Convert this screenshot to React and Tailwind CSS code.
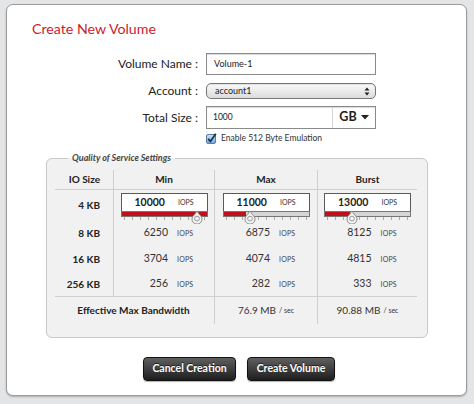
import React from 'react';

const rows = [
  { size: '8 KB', min: 6250, max: 6875, burst: 8125 },
  { size: '16 KB', min: 3704, max: 4074, burst: 4815 },
  { size: '256 KB', min: 256, max: 282, burst: 333 },
];

const Iops = ({ value }) => (
  <div className="flex items-center justify-center">
    <span className="w-[32px] text-right text-[10.5px] text-[#333]">{value}</span>
    <span className="ml-[9px] w-[15px] text-[7px] text-[#444] tracking-[0.2px]">IOPS</span>
  </div>
);

const Slider = ({ value, pct, handle }) => (
  <div className="relative w-[87px] mx-auto mt-[3px]">
    <div className="h-[18px] bg-white border border-[#5a5a5a] border-b-0 flex items-center justify-center">
      <span className="text-[10.5px] font-bold text-[#222]">{value}</span>
      <span className="ml-[13px] text-[7px] text-[#333]">IOPS</span>
    </div>
    <div className="h-[6px] border border-[#777] bg-[#d6d6d6]">
      <div className="h-full bg-[#c10f1c]" style={{ width: pct + '%' }} />
    </div>
    <div className="flex justify-between px-[3px] h-[5px]">
      {Array.from({ length: 11 }).map((_, i) => (
        <span key={i} className="w-px h-[3px] bg-[#aaa]" />
      ))}
    </div>
    <svg
      className="absolute top-[17px]"
      style={{ left: handle - 7 }}
      width="14"
      height="14"
      viewBox="0 0 14 14"
    >
      <path d="M7 1 L9.5 4.8 A5 5 0 1 1 4.5 4.8 Z" fill="#f4f4f4" stroke="#8a8a8a" strokeWidth="1" />
      <circle cx="7" cy="8.6" r="2.4" fill="none" stroke="#9a9a9a" strokeWidth="1" />
    </svg>
  </div>
);

const Checkbox = () => (
  <svg width="11" height="11" viewBox="0 0 11 11">
    <defs>
      <linearGradient id="cb" x1="0" y1="0" x2="0" y2="1">
        <stop offset="0" stopColor="#cfe3f7" />
        <stop offset="1" stopColor="#6ea6dc" />
      </linearGradient>
    </defs>
    <rect x="0.5" y="1.5" width="9" height="9" rx="1.5" fill="url(#cb)" stroke="#5a7fa8" />
    <path d="M2.2 5.8 L4.4 8.4 L9.8 0.8" fill="none" stroke="#1b2f4a" strokeWidth="1.8" />
  </svg>
);

export default function App() {
  return (
    <div className="w-[474px] h-[404px] bg-[#e4e5e6] pt-[4px] pl-[6px] font-[Lato,sans-serif] text-[#222]">
      <div className="w-[461px] h-[392px] bg-white border border-[#9c9c9c] rounded-[7px] shadow-[0_1px_2px_rgba(0,0,0,0.25)]">
        <h1 className="pl-[25px] pt-[15px] text-[14.2px] leading-[18px] text-[#cc1b2b]">Create New Volume</h1>

        {/* form */}
        <div className="mt-[15px] grid grid-cols-[191px_170px] gap-x-[8px] items-center">
          <label className="text-right text-[12px]">Volume Name :</label>
          <div className="h-[22px] border border-[#8a8a8a] shadow-[inset_0_1px_1px_rgba(0,0,0,0.15)] flex items-center pl-[7px] text-[9px]">
            Volume-1
          </div>

          <label className="mt-[7px] text-right text-[12px]">Account :</label>
          <div className="mt-[7px] h-[16px] rounded-[5px] border border-[#777] bg-gradient-to-b from-[#fafafa] to-[#dcdcdc] shadow-[inset_0_1px_1px_rgba(0,0,0,0.1)] flex items-center justify-between pl-[8px] pr-[5px] text-[9px]">
            <span>account1</span>
            <svg width="6" height="9" viewBox="0 0 6 9">
              <path d="M0.5 3.5 L3 0.5 L5.5 3.5 Z M0.5 5.5 L3 8.5 L5.5 5.5 Z" fill="#222" />
            </svg>
          </div>

          <label className="mt-[6px] text-right text-[12px]">Total Size :</label>
          <div className="mt-[6px] h-[23px] border border-[#8a8a8a] shadow-[inset_0_1px_1px_rgba(0,0,0,0.15)] flex items-stretch text-[8.5px]">
            <span className="flex-1 flex items-center pl-[6px]">1000</span>
            <div className="w-[43px] border-l border-[#d6d6d6] flex items-center justify-center gap-[4px]">
              <span className="text-[12.5px] font-bold">GB</span>
              <svg width="8" height="5" viewBox="0 0 8 5">
                <path d="M0 0 H8 L4 4.5 Z" fill="#222" />
              </svg>
            </div>
          </div>

          <div />
          <div className="mt-[3px] flex items-center gap-[4px] h-[12px] text-[8.5px] text-[#333]">
            <Checkbox />
            <span>Enable 512 Byte Emulation</span>
          </div>
        </div>

        {/* QoS */}
        <fieldset className="ml-[39px] mt-[8px] w-[382px] h-[186px] rounded-[6px] border border-[#c9c9c9] bg-[#f1f1f1] pl-[8px] pt-[6px]">
          <legend className="ml-[13px] px-[4px] text-[9px] font-bold italic text-[#444] leading-[12px]">
            Quality of Service Settings
          </legend>

          <div className="grid grid-cols-[58px_101px_103px_100px] text-[10px]">
            {/* header */}
            <div className="h-[20px] border-b border-[#cfcfcf] flex items-center justify-end pr-[13px] font-bold">IO Size</div>
            <div className="h-[20px] border-b border-l border-[#cfcfcf] flex items-center justify-center font-bold">Min</div>
            <div className="h-[20px] border-b border-l border-[#cfcfcf] flex items-center justify-center font-bold">Max</div>
            <div className="h-[20px] border-b border-l border-[#cfcfcf] flex items-center justify-center font-bold">Burst</div>

            {/* 4 KB slider row */}
            <div className="h-[30px] flex items-center justify-end pr-[13px] font-bold">4 KB</div>
            <div className="h-[30px] border-l border-[#cfcfcf]">
              <Slider value="10000" pct={100} handle={76} />
            </div>
            <div className="h-[30px] border-l border-[#cfcfcf]">
              <Slider value="11000" pct={27} handle={27} />
            </div>
            <div className="h-[30px] border-l border-[#cfcfcf]">
              <Slider value="13000" pct={29} handle={28} />
            </div>

            {rows.map((r, i) => (
              <React.Fragment key={r.size}>
                <div className={`${i === 2 ? 'h-[25px] border-b' : 'h-[26px]'} border-[#cfcfcf] flex items-center justify-end pr-[13px] font-bold`}>
                  {r.size}
                </div>
                <div className={`${i === 2 ? 'h-[25px] border-b' : 'h-[26px]'} border-l border-[#cfcfcf] flex items-center`}>
                  <div className="w-full"><Iops value={r.min} /></div>
                </div>
                <div className={`${i === 2 ? 'h-[25px] border-b' : 'h-[26px]'} border-l border-[#cfcfcf] flex items-center`}>
                  <div className="w-full"><Iops value={r.max} /></div>
                </div>
                <div className={`${i === 2 ? 'h-[25px] border-b' : 'h-[26px]'} border-l border-[#cfcfcf] flex items-center`}>
                  <div className="w-full"><Iops value={r.burst} /></div>
                </div>
              </React.Fragment>
            ))}

            {/* bandwidth */}
            <div className="col-span-2 h-[27px] flex items-center justify-center font-bold pr-[2px]">Effective Max Bandwidth</div>
            <div className="h-[27px] border-l border-[#cfcfcf] flex items-center justify-center text-[#333]">
              76.9 MB<span className="ml-[3px] text-[7px]">/ sec</span>
            </div>
            <div className="h-[27px] border-l border-[#cfcfcf] flex items-center justify-center text-[#333]">
              90.88 MB<span className="ml-[3px] text-[7px]">/ sec</span>
            </div>
          </div>
        </fieldset>

        {/* buttons */}
        <div className="mt-[19px] pl-[136px] flex gap-[11px]">
          <button className="w-[93px] h-[24px] rounded-[4px] border border-[#111] bg-gradient-to-b from-[#606060] to-[#1f1f1f] text-white text-[10.5px] font-bold [text-shadow:0_-1px_0_rgba(0,0,0,0.6)] shadow-[0_1px_1px_rgba(0,0,0,0.3)]">
            Cancel Creation
          </button>
          <button className="w-[88px] h-[24px] rounded-[4px] border border-[#111] bg-gradient-to-b from-[#606060] to-[#1f1f1f] text-white text-[10.5px] font-bold [text-shadow:0_-1px_0_rgba(0,0,0,0.6)] shadow-[0_1px_1px_rgba(0,0,0,0.3)]">
            Create Volume
          </button>
        </div>
      </div>
    </div>
  );
}
